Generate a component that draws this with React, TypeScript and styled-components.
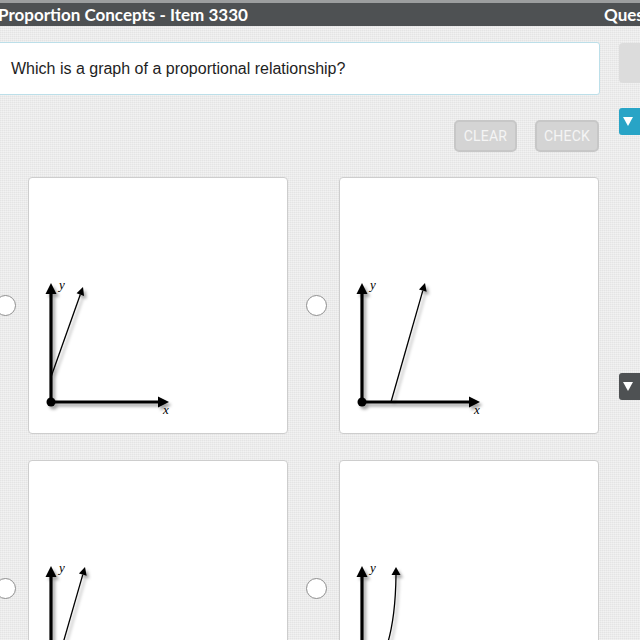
import * as React from "react";
import styled, { createGlobalStyle } from "styled-components";

const GlobalStyle = createGlobalStyle`
  html, body {
    margin: 0;
    padding: 0;
  }
  body {
    font-family: "Liberation Sans", Arial, sans-serif;
    background: #ebebeb;
  }
`;

type GraphKind = "offsetY" | "offsetX" | "origin" | "curve";

const OPTIONS: GraphKind[] = ["offsetY", "offsetX", "origin", "curve"];

const Page = styled.div`
  width: 640px;
  height: 640px;
  overflow: hidden;
  background-color: #ebebeb;
  background-image: repeating-linear-gradient(
      0deg,
      rgba(255, 255, 255, 0.35) 0 1px,
      transparent 1px 2px
    ),
    repeating-linear-gradient(
      90deg,
      rgba(0, 0, 0, 0.03) 0 1px,
      transparent 1px 2px
    );
`;

const Header = styled.header`
  display: grid;
  grid-template-columns: 1fr 36px;
  align-items: center;
  height: 23px;
  border-top: 3px solid #9c9e9f;
  background: #4e5153;
  color: #ffffff;
  font-family: Lato, "Open Sans", sans-serif;
  font-weight: 700;
  font-size: 17px;
  white-space: nowrap;
`;

const Title = styled.span`
  margin-left: -2px;
`;

const HeaderRight = styled.span`
  overflow: hidden;
`;

const Main = styled.main`
  display: flex;
  margin-left: -5px;
  padding-top: 16px;
`;

const Content = styled.section`
  display: flex;
  flex-direction: column;
  width: 605px;
  flex-shrink: 0;
`;

const QuestionBox = styled.div`
  display: flex;
  align-items: center;
  height: 51px;
  padding-left: 15px;
  background: #ffffff;
  border: 1px solid #bcdfe9;
  border-radius: 3px;
  font-size: 16px;
  color: #1e1e1e;
`;

const Actions = styled.div`
  display: flex;
  justify-content: flex-end;
  gap: 18px;
  margin: 25px 1px 25px 0;
`;

const ActionButton = styled.button<{ $width: number }>`
  width: ${({ $width }) => $width}px;
  height: 32px;
  padding: 0;
  background: #d4d4d4;
  border: 2px solid #c7c7c7;
  border-radius: 5px;
  color: #f5f5f5;
  font-family: Roboto, sans-serif;
  font-size: 14px;
  letter-spacing: 0.2px;
`;

const Choices = styled.div`
  display: grid;
  grid-template-columns: 293px 293px;
  column-gap: 18px;
  row-gap: 26px;
`;

const Choice = styled.label`
  display: flex;
  align-items: center;
  gap: 12px;
`;

const Radio = styled.span`
  width: 19px;
  height: 19px;
  flex-shrink: 0;
  border-radius: 50%;
  background: #ffffff;
  border: 1px solid #8f8f8f;
`;

const Card = styled.div`
  width: 258px;
  height: 255px;
  flex-shrink: 0;
  background: #ffffff;
  border: 1px solid #cdcdcd;
  border-radius: 4px;
`;

const GraphSvg = styled.svg`
  display: block;
  width: 100%;
  height: 100%;
`;

const Rail = styled.aside`
  display: flex;
  flex-direction: column;
  margin-left: 19px;
  flex-shrink: 0;
`;

const RailTab = styled.div`
  width: 30px;
  height: 40px;
  margin-top: 1px;
  background: #dcdcdc;
  border-radius: 4px;
`;

const RailToggle = styled.div<{ $color: string; $top: number }>`
  display: flex;
  align-items: center;
  justify-content: flex-start;
  width: 30px;
  height: 27px;
  margin-top: ${({ $top }) => $top}px;
  padding-left: 4px;
  box-sizing: border-box;
  background: ${({ $color }) => $color};
  border-radius: 3px;
`;

const Triangle = () => (
  <svg width="10" height="9" viewBox="0 0 10 9">
    <path d="M0 0 L10 0 L5 9 Z" fill="#ffffff" />
  </svg>
);

const Arrow = ({ x1, y1, x2, y2, size, width }: {
  x1: number; y1: number; x2: number; y2: number; size: number; width: number;
}) => {
  const a = Math.atan2(y2 - y1, x2 - x1);
  const bx = x2 - Math.cos(a) * size;
  const by = y2 - Math.sin(a) * size;
  const px = Math.sin(a) * size * 0.5;
  const py = -Math.cos(a) * size * 0.5;
  return (
    <g>
      <line x1={x1} y1={y1} x2={bx} y2={by} stroke="#000" strokeWidth={width} />
      <path d={`M${x2} ${y2} L${bx + px} ${by + py} L${bx - px} ${by - py} Z`} fill="#000" />
    </g>
  );
};

const Graph = ({ kind, id }: { kind: GraphKind; id: string }) => (
  <GraphSvg viewBox="0 0 258 255">
    <defs>
      <filter id={id} x="-20%" y="-20%" width="140%" height="140%">
        <feDropShadow dx="2.5" dy="3" stdDeviation="1.6" floodColor="#000" floodOpacity="0.35" />
      </filter>
    </defs>
    <g filter={`url(#${id})`}>
      <Arrow x1={22} y1={224} x2={22} y2={105} size={11} width={3.2} />
      <Arrow x1={22} y1={224} x2={140} y2={224} size={11} width={3.2} />
      <circle cx={22} cy={224} r={4.5} fill="#000" />
      {kind === "offsetY" && <Arrow x1={22} y1={199} x2={54} y2={109} size={8} width={1.3} />}
      {kind === "offsetX" && <Arrow x1={51} y1={224} x2={85} y2={105} size={8} width={1.3} />}
      {kind === "origin" && <Arrow x1={22} y1={224} x2={56} y2={106} size={8} width={1.3} />}
      {kind === "curve" && (
        <g>
          <path d="M22 224 Q55 200 56 114" fill="none" stroke="#000" strokeWidth={1.3} />
          <path d="M56 106 L60.5 114 L51.5 114 Z" fill="#000" />
        </g>
      )}
    </g>
    <text x={30} y={111} fontFamily="'Liberation Serif', serif" fontStyle="italic" fontSize="13">
      y
    </text>
    <text x={134} y={236} fontFamily="'Liberation Serif', serif" fontStyle="italic" fontSize="13">
      x
    </text>
  </GraphSvg>
);

const App = () => (
  <Page>
    <GlobalStyle />
    <Header>
      <Title>Proportion Concepts - Item 3330</Title>
      <HeaderRight>Questions</HeaderRight>
    </Header>
    <Main>
      <Content>
        <QuestionBox>Which is a graph of a proportional relationship?</QuestionBox>
        <Actions>
          <ActionButton $width={63}>CLEAR</ActionButton>
          <ActionButton $width={64}>CHECK</ActionButton>
        </Actions>
        <Choices>
          {OPTIONS.map((kind, i) => (
            <Choice key={kind}>
              <Radio />
              <Card>
                <Graph kind={kind} id={`shadow-${i}`} />
              </Card>
            </Choice>
          ))}
        </Choices>
      </Content>
      <Rail>
        <RailTab />
        <RailToggle $color="#28a4c6" $top={25}>
          <Triangle />
        </RailToggle>
        <RailToggle $color="#4e5153" $top={238}>
          <Triangle />
        </RailToggle>
      </Rail>
    </Main>
  </Page>
);

export default App;
